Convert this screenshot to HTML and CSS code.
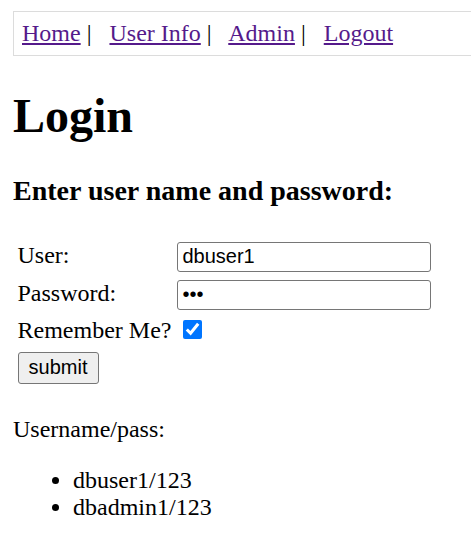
FILE: index.html
```html
<!DOCTYPE html>
<html>
<head>
<meta charset="utf-8">
<title>Login</title>
<link rel="stylesheet" href="styles.css">
</head>
<body>
<div class="nav"><a href="#">Home</a> | &nbsp; <a href="#">User Info</a> | &nbsp; <a href="#">Admin</a> | &nbsp; <a href="#">Logout</a></div>
<h1>Login</h1>
<h3>Enter user name and password:</h3>
<form class="login-form">
<table class="form-table">
<tr><td class="label">User:</td><td><input class="field" type="text" value="dbuser1"></td></tr>
<tr><td class="label">Password:</td><td><input class="field" type="password" value="123"></td></tr>
<tr><td class="label">Remember Me?</td><td><input class="check" type="checkbox" checked></td></tr>
<tr><td><button class="btn" type="button">submit</button></td><td></td></tr>
</table>
</form>
<p class="hint">Username/pass:</p>
<ul class="creds">
<li>dbuser1/123</li>
<li>dbadmin1/123</li>
</ul>
</body>
</html>
```
FILE: styles.css
```css
html, body {
  background: #fff;
}
body {
  margin: 11px 0 0 13px;
  font-family: "Liberation Serif", "Times New Roman", serif;
  font-size: 24px;
  color: #000;
  overflow: hidden;
}
.nav {
  border: 1px solid #dcdcdc;
  padding: 8px;
  width: 480px;
  white-space: nowrap;
}
.nav a {
  color: #551a8b;
}
h1 {
  font-size: 48px;
  margin: 32px 0;
}
h3 {
  font-size: 28px;
  margin: 28px 0;
}
.login-form {
  margin: 0;
  padding-bottom: 4px;
}
.form-table {
  border-spacing: 3px;
}
.form-table td {
  padding: 1.5px;
  vertical-align: top;
  line-height: 27.6px;
}
.form-table td.label {
  vertical-align: middle;
  padding-top: 3px;
}
.field {
  box-sizing: border-box;
  display: block;
  width: 254px;
  height: 30px;
  margin: 2px 0 0;
  padding: 1px 4px;
  font-family: "Liberation Sans", Arial, sans-serif;
  font-size: 20px;
  border: 1px solid #767676;
  border-radius: 3px;
}
.check {
  display: block;
  width: 19px;
  height: 19px;
  margin: 4px 0 0 6px;
  accent-color: #0075ff;
}
.btn {
  display: block;
  box-sizing: border-box;
  width: 81px;
  height: 32px;
  margin: 1px 0 0;
  font-family: "Liberation Sans", Arial, sans-serif;
  font-size: 20px;
  padding: 0 8px;
  background: #efefef;
  border: 1px solid #767676;
  border-radius: 3px;
  color: #000;
}
.hint {
  margin: 24px 0;
}
.creds {
  margin: 24px 0;
  padding-left: 60px;
}
```
